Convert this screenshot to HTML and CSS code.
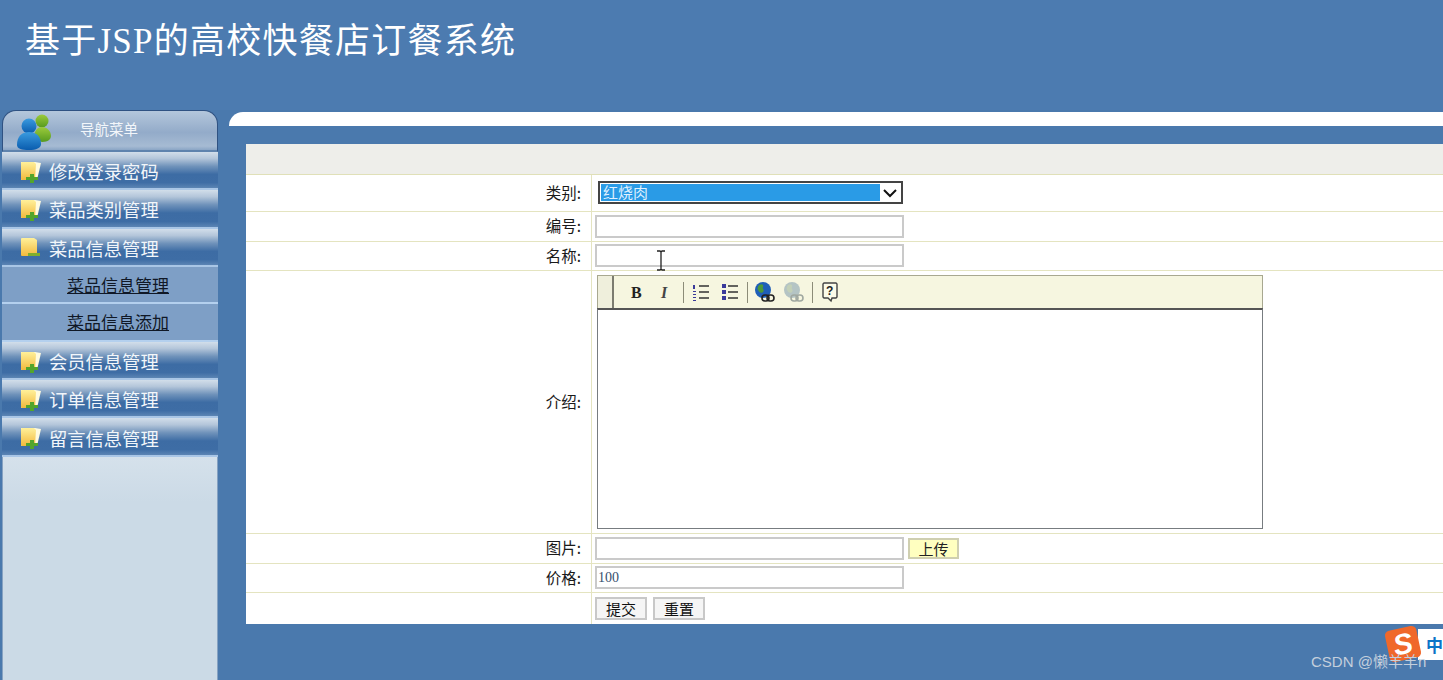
FILE: index.html
```html
<!DOCTYPE html>
<html lang="zh-CN">
<head>
<meta charset="utf-8">
<title>基于JSP的高校快餐店订餐系统</title>
<link rel="stylesheet" href="styles.css">
</head>
<body>
<svg class="defs" width="0" height="0">
  <defs>
    <linearGradient id="folder" x1="0" y1="0" x2="0" y2="1"><stop offset="0" stop-color="#fff09a"/><stop offset="1" stop-color="#f2b93c"/></linearGradient>
    <linearGradient id="blueman" x1="0" y1="0" x2="0" y2="1"><stop offset="0" stop-color="#3a9be0"/><stop offset="1" stop-color="#0a5cae"/></linearGradient>
    <linearGradient id="greenman" x1="0" y1="0" x2="0" y2="1"><stop offset="0" stop-color="#9ccb3c"/><stop offset="1" stop-color="#569a1e"/></linearGradient>
    <symbol id="folder-plus" viewBox="0 0 22 22">
      <path d="M1 1h14l6 1-4 17H2a1 1 0 0 1-1-1z" fill="#fffbe0"/>
      <path d="M1 2a1 1 0 0 1 1-1h12l2 2-1 16H2a1 1 0 0 1-1-1z" fill="url(#folder)"/>
      <path d="M10 13h4v3h4v3h-4v3h-4v-3H6v-3h4z" fill="#53a52c"/>
    </symbol>
    <symbol id="folder-minus" viewBox="0 0 22 22">
      <path d="M1 2a1 1 0 0 1 1-1h12l3 2v16H2a1 1 0 0 1-1-1z" fill="url(#folder)"/>
      <path d="M8 16h12v3H8z" fill="#7fae2e"/>
    </symbol>
  </defs>
</svg>

<header class="banner">
  <h1 class="site-title">基于JSP的高校快餐店订餐系统</h1>
</header>

<div class="layout">
  <aside class="sidebar">
    <div class="side-head">
      <svg class="people" width="36" height="38" viewBox="0 0 36 38">
        <circle cx="25" cy="8" r="6.5" fill="url(#greenman)"/>
        <path d="M17 26c0-8 3-12 8-12s9 4 9 9c0 3-3 6-9 6z" fill="url(#greenman)"/>
        <circle cx="12" cy="13" r="7.5" fill="url(#blueman)"/>
        <path d="M0 32c0-9 5-13 12-13s12 4 12 12c0 4-5 6-12 6S0 36 0 32z" fill="url(#blueman)"/>
      </svg>
      <span class="side-title">导航菜单</span>
    </div>
    <nav class="menu">
      <a class="menu-item"><svg class="folder" width="22" height="22"><use href="#folder-plus"/></svg><span>修改登录密码</span></a>
      <a class="menu-item"><svg class="folder" width="22" height="22"><use href="#folder-plus"/></svg><span>菜品类别管理</span></a>
      <a class="menu-item"><svg class="folder" width="22" height="22"><use href="#folder-minus"/></svg><span>菜品信息管理</span></a>
      <a class="sub-item">菜品信息管理</a>
      <a class="sub-item">菜品信息添加</a>
      <a class="menu-item"><svg class="folder" width="22" height="22"><use href="#folder-plus"/></svg><span>会员信息管理</span></a>
      <a class="menu-item"><svg class="folder" width="22" height="22"><use href="#folder-plus"/></svg><span>订单信息管理</span></a>
      <a class="menu-item"><svg class="folder" width="22" height="22"><use href="#folder-plus"/></svg><span>留言信息管理</span></a>
    </nav>
    <div class="side-rest"></div>
  </aside>

  <main class="content">
    <div class="white-bar"></div>
    <section class="panel">
      <div class="form-head"></div>
      <div class="row row-select">
        <div class="label">类别:</div>
        <div class="field"><div class="fake-select"><span class="selected">红烧肉</span>
          <svg class="chev" width="16" height="10" viewBox="0 0 16 10"><path d="M2 2l6 6 6-6" fill="none" stroke="#111" stroke-width="2"/></svg></div></div>
      </div>
      <div class="row row-input">
        <div class="label">编号:</div>
        <div class="field"><input class="text-input" type="text"></div>
      </div>
      <div class="row row-input">
        <div class="label">名称:</div>
        <div class="field"><input class="text-input" type="text"></div>
      </div>
      <div class="row row-editor">
        <div class="label">介绍:</div>
        <div class="field field-top">
          <div class="editor">
            <div class="toolbar">
              <div class="grip"></div>
              <svg class="tool tool-b" width="18" height="18" viewBox="0 0 18 18"><text x="3" y="15" class="glyph-b">B</text></svg>
              <svg class="tool tool-i" width="18" height="18" viewBox="0 0 18 18"><text x="4" y="15" class="glyph-i">I</text></svg>
              <span class="sep sep-1"></span>
              <svg class="tool" width="20" height="20" viewBox="0 0 20 20">
                <path d="M2 3h2v4H2zM2 9h3v1H2zM2 12h3v1H2zM2 15h3v1H2zM2 18h3v1H2z" fill="#3a3a9a"/>
                <path d="M8 4h10M8 10h10M8 16h10" stroke="#333" stroke-width="1.4"/>
              </svg>
              <svg class="tool tool-ul" width="20" height="20" viewBox="0 0 20 20">
                <path d="M2 2h4v4H2zM2 8h4v4H2zM2 14h4v4H2z" fill="#3a3a9a"/>
                <path d="M8 4h10M8 10h10M8 16h10" stroke="#333" stroke-width="1.4"/>
              </svg>
              <span class="sep sep-2"></span>
              <svg class="tool tool-link" width="22" height="22" viewBox="0 0 22 22">
                <circle cx="9" cy="9" r="8" fill="#1f5fb8"/>
                <path d="M5 4c3-2 5 0 4 2s2 3 0 5-4 0-5-2 0-3 1-5z" fill="#4d9a3a"/>
                <rect x="8" y="14" width="7" height="6" rx="3" fill="none" stroke="#222" stroke-width="1.6"/>
                <rect x="13" y="14" width="7" height="6" rx="3" fill="none" stroke="#222" stroke-width="1.6"/>
              </svg>
              <svg class="tool tool-unlink" width="22" height="22" viewBox="0 0 22 22">
                <circle cx="9" cy="9" r="8" fill="#b4c4c4"/>
                <path d="M5 4c3-2 5 0 4 2s2 3 0 5-4 0-5-2 0-3 1-5z" fill="#c2d0b8"/>
                <rect x="8" y="14" width="7" height="6" rx="3" fill="none" stroke="#a0a8a0" stroke-width="1.6"/>
                <rect x="13" y="14" width="7" height="6" rx="3" fill="none" stroke="#a0a8a0" stroke-width="1.6"/>
              </svg>
              <span class="sep sep-3"></span>
              <svg class="tool tool-help" width="18" height="22" viewBox="0 0 18 22">
                <path d="M3 2h12l1 1v13l-1 1h-4l-1 3-3-3H3l-1-1V3z" fill="#fbfbe8" stroke="#444" stroke-width="1.4"/>
                <text x="5" y="14" class="glyph-q">?</text>
              </svg>
            </div>
            <div class="editor-body"></div>
          </div>
        </div>
      </div>
      <div class="row row-input">
        <div class="label">图片:</div>
        <div class="field"><input class="text-input" type="text"><button class="upload" type="button">上传</button></div>
      </div>
      <div class="row row-input">
        <div class="label">价格:</div>
        <div class="field"><input class="text-input" type="text" value="100"></div>
      </div>
      <div class="row row-actions">
        <div class="label"></div>
        <div class="field"><button class="btn" type="button">提交</button><button class="btn" type="button">重置</button></div>
      </div>
    </section>
  </main>
</div>

<svg class="ibeam" width="10" height="21" viewBox="0 0 10 21"><path d="M1 1h3l1 1 1-1h3M5 2v17M1 20h3l1-1 1 1h3" fill="none" stroke="#222" stroke-width="1.3"/></svg>

<div class="ime">
  <span class="ime-logo">S</span>
  <span class="ime-box">中</span>
</div>
<div class="watermark">CSDN @懒羊羊n</div>
</body>
</html>
```

FILE: styles.css
```css
* { box-sizing: border-box; }
html, body { margin: 0; height: 100%; }
body {
  height: 680px;
  overflow: hidden;
  position: relative;
  background: #4a79ad;
  font-family: "Liberation Serif", "Noto Sans CJK SC", serif;
  display: flex;
  flex-direction: column;
}
.defs { position: absolute; }

.banner { height: 110px; flex: none; padding: 21px 0 0 25px; background: #4c7bb0; }
.site-title {
  margin: 0;
  color: #fff;
  font-weight: 400;
  font-size: 35px;
  line-height: 42px;
  letter-spacing: 1.25px;
  white-space: nowrap;
}

.layout { flex: 1; display: flex; min-height: 0; padding-left: 2px; }

.sidebar { width: 216px; flex: none; display: flex; flex-direction: column; }
.side-head {
  height: 42px;
  flex: none;
  display: flex;
  align-items: center;
  padding-left: 14px;
  border: 1px solid #2f5282;
  border-bottom: 2px solid #5f83ad;
  border-radius: 14px 14px 0 0;
  background: linear-gradient(#b4c7dc, #93abc9 55%, #a6bbd3 90%, #8aa5c5);
}
.people { flex: none; margin-top: 2px; }
.side-title {
  margin: -4px 0 0 27px;
  color: #f2f6fa;
  font-size: 14.5px;
  font-family: "Noto Sans CJK SC", sans-serif;
}

.menu { display: flex; flex-direction: column; flex: none; }
.menu-item {
  height: 38.3px;
  display: flex;
  align-items: center;
  gap: 7px;
  padding: 2px 0 0 18px;
  color: #f2f6fa;
  font-family: "Noto Sans CJK SC", sans-serif;
  font-size: 18.3px;
  border-bottom: 2px solid #a9c6e6;
  background: linear-gradient(#d2deea, #b4c6da 18%, #6f92ba 40%, #3d6ca4 62%, #3e6da5 85%, #5c85b4);
}
.folder { flex: none; margin-top: 1px; }
.sub-item {
  height: 37.5px;
  padding: 5px 0 0 65px;
  color: #101826;
  font-family: "Noto Sans CJK SC", sans-serif;
  font-size: 17px;
  line-height: 26px;
  text-decoration: underline;
  border-bottom: 2px solid #b4d0ee;
  background: #7e9fc6;
}
.side-rest {
  flex: 1;
  background: linear-gradient(#d5e1eb, #cbdae6 20%);
  border-left: 1px solid #86a2c2;
  border-right: 1px solid #86a2c2;
}

.content { flex: 1; min-width: 0; padding: 2px 0 0 11px; }
.white-bar { height: 14px; background: #fff; border-radius: 14px 0 0 0; }
.panel { margin: 18px 0 0 17px; background: #fff; }
.form-head { height: 31px; background: #eeeeea; border-bottom: 1px solid #e0e0b8; }

.row { display: flex; border-bottom: 1px solid #e4e4c0; background: #fff; }
.row-select { height: 37px; }
.row-input { height: 29.5px; }
.row-editor { height: 263px; }
.row-actions { height: 31px; border-bottom: 0; }
.label {
  width: 346px;
  flex: none;
  display: flex;
  align-items: center;
  justify-content: flex-end;
  padding: 0 10px 2px 0;
  color: #1a1a1a;
  font-size: 15.5px;
  font-family: "Noto Sans CJK SC", sans-serif;
  border-right: 1px solid #e4e4c0;
}
.field { display: flex; align-items: center; gap: 4px; padding-left: 3px; flex: 1; }
.field-top { align-items: flex-start; padding-top: 4px; }

.fake-select {
  width: 305px;
  height: 23px;
  margin: 0 0 1px 3px;
  display: flex;
  align-items: center;
  justify-content: space-between;
  padding: 1px 3px 1px 1px;
  background: #fff;
  border: 2px solid #444;
}
.selected {
  width: 279px;
  height: 100%;
  background: #2a9be6;
  color: #dff0ff;
  font-size: 15px;
  line-height: 15px;
  padding-left: 2px;
  font-family: "Noto Sans CJK SC", sans-serif;
}
.text-input {
  width: 309px;
  height: 23px;
  padding: 0 1px;
  background: #fff;
  border: 2px solid #cacaca;
  color: #37506e;
  font: 14px "Liberation Serif", serif;
}
.upload {
  width: 51px;
  height: 21px;
  padding: 0;
  background: #ffffc0;
  border: 2px solid #cfcfb0;
  color: #222;
  font: 15px/15px "Noto Sans CJK SC", sans-serif;
}
.row-actions .field { gap: 6px; }
.btn {
  width: 52px;
  height: 23px;
  padding: 0;
  background: #f5f5f5;
  border: 2px solid #c8c8c8;
  color: #111;
  font: 15px/15px "Noto Sans CJK SC", sans-serif;
}

.editor { width: 666px; height: 254px; margin-left: 2px; display: flex; flex-direction: column; }
.toolbar {
  height: 33px;
  flex: none;
  display: flex;
  align-items: center;
  background: #f6f6e0;
  border: 1px solid #a8a890;
  border-bottom: 0;
}
.grip { width: 16px; height: 100%; flex: none; border-right: 2px solid #7c7c70; background: #efefdc; margin-right: 14px; }
.tool { flex: none; }
.tool-i { margin-left: 11px; }
.sep-1 { margin: 0 7px 0 8px; }
.tool-ul { margin-left: 9px; }
.tool-unlink { margin-left: 7px; }
.glyph-b { font: 700 16px "Liberation Serif", serif; fill: #222; }
.glyph-i { font: italic 700 16px "Liberation Serif", serif; fill: #444; }
.glyph-q { font: 700 12px "Liberation Sans", sans-serif; fill: #222; }
.sep { width: 1px; height: 21px; flex: none; background: #8c8c78; }
.sep-2 { margin: 0 6px 0 7px; }
.sep-3 { margin: 0 8px 0 7px; }
.editor-body { flex: 1; background: #fff; border: 1px solid #777c80; border-top: 2px solid #555; }

.ibeam { position: absolute; left: 656px; top: 250px; }

.ime { position: absolute; left: 1387px; top: 626px; width: 56px; height: 36px; }
.ime-box {
  position: absolute;
  left: 31px;
  top: 3px;
  width: 25px;
  height: 31px;
  padding-left: 8px;
  background: #fff;
  color: #0b74c8;
  font: 700 17px/31px "Noto Sans CJK SC", sans-serif;
}
.ime-logo {
  position: absolute;
  left: 0;
  top: 2px;
  z-index: 1;
  width: 32px;
  height: 32px;
  border-radius: 5px;
  transform: rotate(-12deg);
  background: #f0682a;
  color: #fff;
  text-align: center;
  font: italic 700 29px/32px "Liberation Sans", sans-serif;
}
.watermark {
  position: absolute;
  left: 1311px;
  top: 652px;
  z-index: 2;
  color: #c4cfdc;
  font: 15px/19px "Liberation Sans", "Noto Sans CJK SC", sans-serif;
  white-space: nowrap;
}
```
